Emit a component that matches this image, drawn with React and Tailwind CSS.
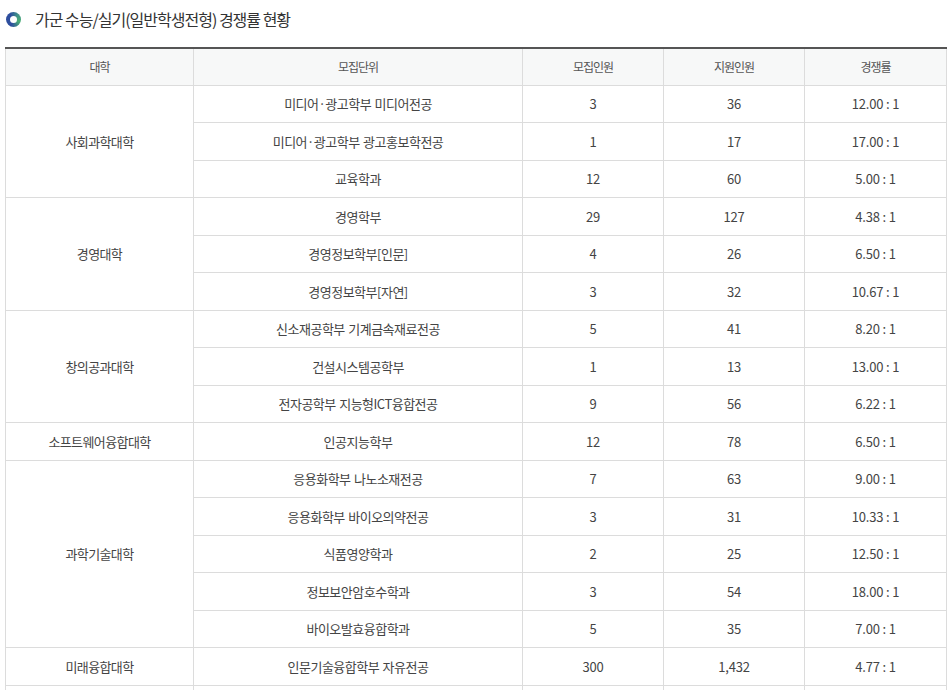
const groups = [
  {
    college: '사회과학대학',
    rows: [
      ['미디어·광고학부 미디어전공', '3', '36', '12.00 : 1'],
      ['미디어·광고학부 광고홍보학전공', '1', '17', '17.00 : 1'],
      ['교육학과', '12', '60', '5.00 : 1'],
    ],
  },
  {
    college: '경영대학',
    rows: [
      ['경영학부', '29', '127', '4.38 : 1'],
      ['경영정보학부[인문]', '4', '26', '6.50 : 1'],
      ['경영정보학부[자연]', '3', '32', '10.67 : 1'],
    ],
  },
  {
    college: '창의공과대학',
    rows: [
      ['신소재공학부 기계금속재료전공', '5', '41', '8.20 : 1'],
      ['건설시스템공학부', '1', '13', '13.00 : 1'],
      ['전자공학부 지능형ICT융합전공', '9', '56', '6.22 : 1'],
    ],
  },
  {
    college: '소프트웨어융합대학',
    rows: [['인공지능학부', '12', '78', '6.50 : 1']],
  },
  {
    college: '과학기술대학',
    rows: [
      ['응용화학부 나노소재전공', '7', '63', '9.00 : 1'],
      ['응용화학부 바이오의약전공', '3', '31', '10.33 : 1'],
      ['식품영양학과', '2', '25', '12.50 : 1'],
      ['정보보안암호수학과', '3', '54', '18.00 : 1'],
      ['바이오발효융합학과', '5', '35', '7.00 : 1'],
    ],
  },
  {
    college: '미래융합대학',
    rows: [['인문기술융합학부 자유전공', '300', '1,432', '4.77 : 1']],
  },
  {
    college: '',
    rows: [['', '', '', '']],
  },
];

const td = 'border border-[#dcdcdc] h-[37.5px] p-0 text-center align-middle';

export default function App() {
  return (
    <div className="bg-white min-h-screen px-[5px] pt-[6px] text-[#444]" style={{ fontFamily: '"Noto Sans CJK KR", "Noto Sans", sans-serif' }}>
      <h2 className="flex items-center h-[26px] text-[16px] font-normal text-[#333] tracking-[-1px]">
        <span className="w-[15px] h-[15px] rounded-full mr-[14px] ml-[1px] bg-[conic-gradient(from_200deg,#2e4e9e,#2e4e9e_35%,#3f8f8a_55%,#4aae74_75%,#2e4e9e)] flex items-center justify-center">
          <span className="w-[7px] h-[7px] rounded-full bg-white" />
        </span>
        가군 수능/실기(일반학생전형) 경쟁률 현황
      </h2>
      <table className="mt-[15px] w-[941px] border-collapse table-fixed text-[13px] leading-none">
        <colgroup>
          <col className="w-[188px]" />
          <col className="w-[329px]" />
          <col className="w-[141px]" />
          <col className="w-[141px]" />
          <col className="w-[142px]" />
        </colgroup>
        <thead>
          <tr className="bg-[#f7f8f8] text-[12px] text-[#555] tracking-[-1px]">
            {['대학', '모집단위', '모집인원', '지원인원', '경쟁률'].map(h => (
              <th key={h} className="border border-[#dcdcdc] border-t-2 border-t-[#555] h-[37px] p-0 font-normal text-center">{h}</th>
            ))}
          </tr>
        </thead>
        <tbody>
          {groups.map(g =>
            g.rows.map((r, i) => (
              <tr key={g.college + i}>
                {i === 0 && <td rowSpan={g.rows.length} className={td + ' tracking-[-0.6px]'}>{g.college}</td>}
                {r.map((c, j) => (
                  <td key={j} className={j === 0 ? td + ' tracking-[-0.5px] [word-spacing:1px]' : td + ' tracking-[-0.2px]'}>{c}</td>
                ))}
              </tr>
            ))
          )}
        </tbody>
      </table>
    </div>
  );
}
